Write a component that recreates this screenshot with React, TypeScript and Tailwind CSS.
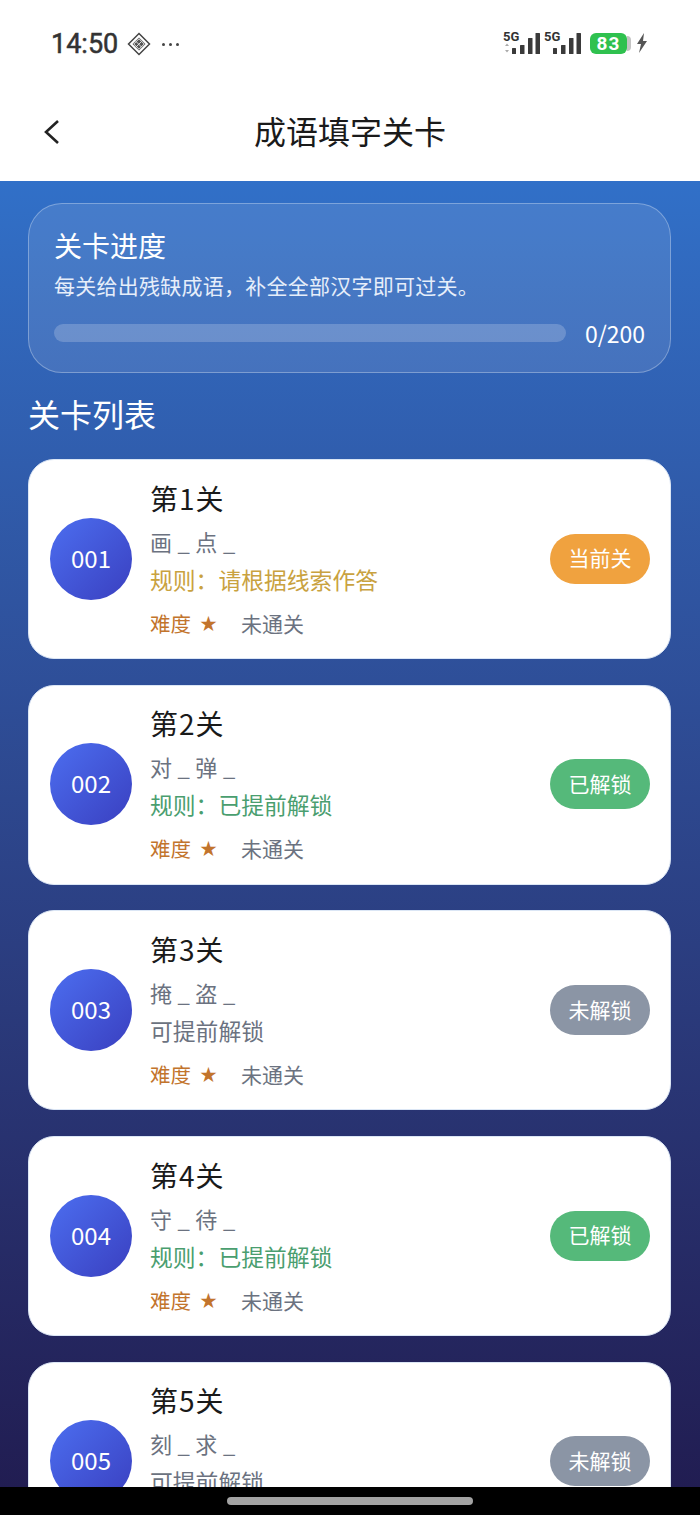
import React, { FC } from "react";

type Level = {
  no: string;
  name: string;
  hint: string;
  rule: string;
  ruleClass: string;
  badge: string;
  badgeClass: string;
};

const levels: Level[] = [
  { no: "001", name: "第1关", hint: "画 _ 点 _", rule: "规则：请根据线索作答", ruleClass: "text-[#c9a23f]", badge: "当前关", badgeClass: "bg-[#f0a23f]" },
  { no: "002", name: "第2关", hint: "对 _ 弹 _", rule: "规则：已提前解锁", ruleClass: "text-[#4a9e6f]", badge: "已解锁", badgeClass: "bg-[#55b97a]" },
  { no: "003", name: "第3关", hint: "掩 _ 盗 _", rule: "可提前解锁", ruleClass: "text-[#6b7280]", badge: "未解锁", badgeClass: "bg-[#8b95a5]" },
  { no: "004", name: "第4关", hint: "守 _ 待 _", rule: "规则：已提前解锁", ruleClass: "text-[#4a9e6f]", badge: "已解锁", badgeClass: "bg-[#55b97a]" },
  { no: "005", name: "第5关", hint: "刻 _ 求 _", rule: "可提前解锁", ruleClass: "text-[#6b7280]", badge: "未解锁", badgeClass: "bg-[#8b95a5]" },
];

const Signal: FC<{ arrows?: boolean }> = ({ arrows }) => (
  <svg width="40" height="26" viewBox="0 0 40 26" className="block">
    <text x="0" y="11" fontSize="13" fontWeight="700" fill="#333" fontFamily="Roboto, sans-serif">5G</text>
    {arrows && <path d="M2 16l2-2.5 2 2.5zM2 20l2 2.5 2-2.5z" fill="#aaa" />}
    <rect x="9" y="18" width="4" height="6" rx="0.5" fill="#3a3a3a" />
    <rect x="17" y="15" width="4.5" height="9" rx="0.5" fill="#3a3a3a" />
    <rect x="25" y="8" width="4.5" height="16" rx="0.5" fill="#3a3a3a" />
    <rect x="32.5" y="3" width="4.5" height="21" rx="0.5" fill="#3a3a3a" />
  </svg>
);

const StatusBar: FC = () => (
  <div className="h-[90px] bg-white flex items-start justify-between pt-[29px] pl-[51px] pr-[52px]">
    <div className="flex items-center h-[30px]">
      <span className="text-[27px] font-normal text-[#333] font-['Roboto',sans-serif] leading-none [-webkit-text-stroke:0.5px_#333]">14:50</span>
      <svg width="24" height="24" viewBox="0 0 24 24" className="ml-[9px]">
        <path d="M12 1.5L22.5 12 12 22.5 1.5 12z" fill="none" stroke="#444" strokeWidth="1.5" />
        <path d="M12 5.5l6.5 6.5-6.5 6.5L5.500 12z" fill="#555" />
        <path d="M9 9.500l5.500 5.500M12 6.800l5.200 5.200M6.800 12l5.200 5.200M14.500 9.500L9 15M12 6.800L6.800 12M17.200 12L12 17.200" stroke="#eee" strokeWidth="0.9" />
      </svg>
      <span className="ml-[11px] flex gap-[4px]">
        <i className="w-[3px] h-[3px] rounded-full bg-[#444]" />
        <i className="w-[3px] h-[3px] rounded-full bg-[#444]" />
        <i className="w-[3px] h-[3px] rounded-full bg-[#444]" />
      </span>
    </div>
    <div className="flex items-center h-[28px] gap-[2px]">
      <Signal arrows />
      <div className="-ml-[1px]">
        <Signal />
      </div>
      <div className="ml-[4px] flex items-center">
        <div className="w-[37px] h-[21px] rounded-[6px] bg-[#2fc14f] text-white text-[19px] tracking-[1px] font-bold font-['Roboto',sans-serif] leading-[21px] text-center">83</div>
        <div className="w-[4px] h-[15px] bg-[#c4c4c4] rounded-r-[4px]" />
      </div>
      <svg width="12" height="20" viewBox="0 0 12 20" className="ml-[3px]">
        <path d="M8 0L1 11h4l-2 9 8-12H7z" fill="#555" />
      </svg>
    </div>
  </div>
);

const NavBar: FC = () => (
  <div className="relative h-[91px] bg-white flex items-center justify-center pb-[12px]">
    <svg width="18" height="28" viewBox="0 0 18 28" className="absolute left-[43px] top-[28px]">
      <path d="M15 3L3 14l12 11" fill="none" stroke="#222" strokeWidth="2.6" />
    </svg>
    <span className="text-[32px] leading-[44px] text-[#1a1a1a]">成语填字关卡</span>
  </div>
);

const LevelCard: FC<{ level: Level }> = ({ level }) => (
  <div className="h-[200px] shrink-0 rounded-[26px] bg-white border border-[#dbe6f5] flex items-center pl-[21px] pr-[20px]">
    <div className="w-[82px] h-[82px] mb-[1px] pb-[2px] shrink-0 rounded-full bg-gradient-to-br from-[#4c6ef0] to-[#3a3fc0] flex items-center justify-center text-white text-[24px]">
      {level.no}
    </div>
    <div className="ml-[18px] pt-[2px] flex-1 flex flex-col">
      <div className="text-[28px] tracking-[1px] leading-[38px] text-[#1a1a1a]">{level.name}</div>
      <div className="mt-[5px] text-[22px] tracking-[0.3px] leading-[38px] text-[#6b7280]">{level.hint}</div>
      <div className={`mt-[1px] text-[22.8px] leading-[38px] ${level.ruleClass}`}>{level.rule}</div>
      <div className="mt-[5px] text-[20.5px] leading-[38px] flex items-center">
        <span className="text-[#c2742c]">难度</span>
        <span className="ml-[9px] text-[17px] text-[#c2742c]">★</span>
        <span className="ml-[24px] text-[21px] text-[#6b7280]">未通关</span>
      </div>
    </div>
    <div className={`w-[100px] h-[50px] mb-[1px] pb-[1px] rounded-full flex items-center justify-center text-white text-[21px] ${level.badgeClass}`}>
      {level.badge}
    </div>
  </div>
);

export default function App() {
  return (
    <div className="w-[700px] h-[1515px] overflow-hidden flex flex-col font-['Noto_Sans_CJK_SC','Noto_Sans',sans-serif]">
      <StatusBar />
      <NavBar />
      <div className="flex-1 overflow-hidden bg-gradient-to-b from-[#3170c8] to-[#211d52] pt-[22px] pl-[28px] pr-[29px]">
        <div className="h-[170px] rounded-[34px] bg-white/10 border border-white/30 px-[25px] pt-[21px]">
          <div className="text-[28px] leading-[40px] text-white">关卡进度</div>
          <div className="mt-[4px] text-[21px] tracking-[0.25px] leading-[32px] text-[#e6eefa]">每关给出残缺成语，补全全部汉字即可过关。</div>
          <div className="mt-[16px] flex items-center">
            <div className="flex-1 h-[18px] rounded-full bg-white/20" />
            <div className="ml-[19px] text-[23px] leading-[32px] text-white">0/200</div>
          </div>
        </div>
        <div className="mt-[16px] text-[32px] leading-[48px] text-white">关卡列表</div>
        <div className="mt-[22px] flex flex-col gap-[25.7px]">
          {levels.map((l) => (
            <LevelCard key={l.no} level={l} />
          ))}
        </div>
      </div>
      <div className="h-[28px] shrink-0 bg-black flex justify-center pt-[10px]">
        <div className="w-[246px] h-[8px] rounded-full bg-[#a3a3a3]" />
      </div>
    </div>
  );
}
